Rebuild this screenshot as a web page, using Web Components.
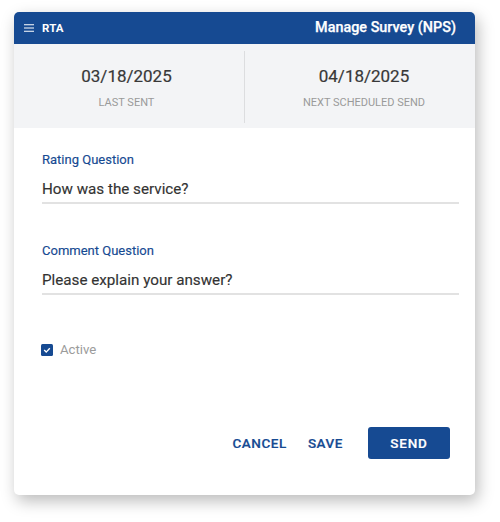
<!DOCTYPE html>
<html>
<head>
<meta charset="utf-8">
<title>Manage Survey</title>
<style>
  html, body { margin: 0; background: #fff; }
  body { font-family: Roboto, "Liberation Sans", sans-serif; padding: 12px 25px 0 14px; box-sizing: border-box; min-height: 522px; }
</style>
</head>
<body>
<survey-card>
  <survey-header title-text="Manage Survey (NPS)"></survey-header>
  <survey-stats>
    <survey-stat class="first" date="03/18/2025" label="LAST SENT"></survey-stat>
    <survey-stat class="second" date="04/18/2025" label="NEXT SCHEDULED SEND"></survey-stat>
  </survey-stats>
  <survey-form></survey-form>
</survey-card>

<script>
const BLUE = '#164a92'

customElements.define('survey-card', class extends HTMLElement {
  constructor () {
    super()
    this.attachShadow({ mode: 'open' }).innerHTML = `
      <style>
        :host {
          display: block;
          width: 461px;
          height: 483px;
          background: #fff;
          border-radius: 5px;
          box-shadow: 3px 6px 16px rgba(0, 0, 0, .27);
          overflow: hidden;
        }
      </style>
      <slot></slot>`
  }
})

customElements.define('survey-header', class extends HTMLElement {
  constructor () {
    super()
    this.attachShadow({ mode: 'open' }).innerHTML = `
      <style>
        :host {
          display: flex;
          align-items: center;
          height: 32px;
          padding: 0 19px 0 10px;
          background: ${BLUE};
          color: #fff;
        }
        svg { display: block; margin-right: 8px; }
        .logo { font-size: 11.5px; font-weight: 700; letter-spacing: .1px; }
        h1 { margin: 0 0 0 auto; font-size: 14.4px; font-weight: 500; line-height: 32px; -webkit-text-stroke: .25px #fff; }
      </style>
      <svg width="10" height="8" viewBox="0 0 10 8"><path d="M0 .7h10M0 4h10M0 7.3h10" stroke="#fff" stroke-width="1.1"/></svg>
      <span class="logo">RTA</span>
      <h1>${this.getAttribute('title-text')}</h1>`
  }
})

customElements.define('survey-stats', class extends HTMLElement {
  constructor () {
    super()
    this.attachShadow({ mode: 'open' }).innerHTML = `
      <style>
        :host {
          display: grid;
          grid-template-columns: 231px 1fr;
          height: 84px;
          padding: 7px 0 5px;
          box-sizing: border-box;
          background: #f3f4f6;
        }
        ::slotted(.first) { border-right: 1px solid #dcdddf; padding-right: 5px; }
        ::slotted(.second) { padding-left: 8px; }
      </style>
      <slot></slot>`
  }
})

customElements.define('survey-stat', class extends HTMLElement {
  constructor () {
    super()
    this.attachShadow({ mode: 'open' }).innerHTML = `
      <style>
        :host { display: block; text-align: center; padding-top: 15px; }
        .date { font-size: 17px; line-height: 20px; font-weight: 400; color: #383838; -webkit-text-stroke: .2px #383838; }
        .label { margin-top: 10px; font-size: 11px; line-height: 13px; color: #9a9a9a; }
      </style>
      <div class="date">${this.getAttribute('date')}</div>
      <div class="label">${this.getAttribute('label')}</div>`
  }
})

customElements.define('survey-field', class extends HTMLElement {
  constructor () {
    super()
    this.attachShadow({ mode: 'open' }).innerHTML = `
      <style>
        :host { display: block; border-bottom: 2px solid #e2e2e2; height: 50px; }
        .label { font-size: 13px; line-height: 15px; color: ${BLUE}; -webkit-text-stroke: .15px ${BLUE}; }
        .value { margin-top: 11px; font-size: 15.2px; line-height: 22px; color: #333; -webkit-text-stroke: .15px #333; }
      </style>
      <div class="label">${this.getAttribute('label')}</div>
      <div class="value">${this.getAttribute('value')}</div>`
  }
})

customElements.define('survey-check', class extends HTMLElement {
  constructor () {
    super()
    this.attachShadow({ mode: 'open' }).innerHTML = `
      <style>
        :host { display: flex; align-items: center; gap: 7px; font-size: 13.2px; line-height: 16px; color: #9b9b9b; }
        svg { display: block; margin-left: -1px; }
      </style>
      <svg width="12" height="12" viewBox="0 0 12 12"><rect width="12" height="12" rx="1.5" fill="${BLUE}"/><path d="M3.2 6.1l2 2 3.6-3.9" fill="none" stroke="#fff" stroke-width="1.4"/></svg>
      <span>Active</span>`
  }
})

customElements.define('survey-button', class extends HTMLElement {
  constructor () {
    super()
    const filled = this.hasAttribute('filled')
    this.attachShadow({ mode: 'open' }).innerHTML = `
      <style>
        :host {
          display: flex;
          align-items: center;
          justify-content: center;
          height: 32px;
          font-size: 13.5px;
          font-weight: 500;
          letter-spacing: .55px;
          -webkit-text-stroke: .2px currentColor;
          color: ${filled ? '#fff' : BLUE};
          background: ${filled ? BLUE : 'transparent'};
          border-radius: 3px;
          ${filled ? 'width: 82px; letter-spacing: .8px;' : ''}
        }
      </style>
      <slot></slot>`
  }
})

customElements.define('survey-form', class extends HTMLElement {
  constructor () {
    super()
    this.attachShadow({ mode: 'open' }).innerHTML = `
      <style>
        :host { display: block; padding: 24px 16px 0 28px; }
        .fields { display: grid; gap: 39px; }
        survey-check { margin-top: 47px; }
        .actions { display: flex; justify-content: flex-end; align-items: center; gap: 21px; margin: 69px 9px 0 0; }
        .actions survey-button[filled] { margin-left: 4px; }
      </style>
      <div class="fields">
        <survey-field label="Rating Question" value="How was the service?"></survey-field>
        <survey-field label="Comment Question" value="Please explain your answer?"></survey-field>
      </div>
      <survey-check></survey-check>
      <div class="actions">
        <survey-button>CANCEL</survey-button>
        <survey-button>SAVE</survey-button>
        <survey-button filled>SEND</survey-button>
      </div>`
  }
})
</script>
</body>
</html>
